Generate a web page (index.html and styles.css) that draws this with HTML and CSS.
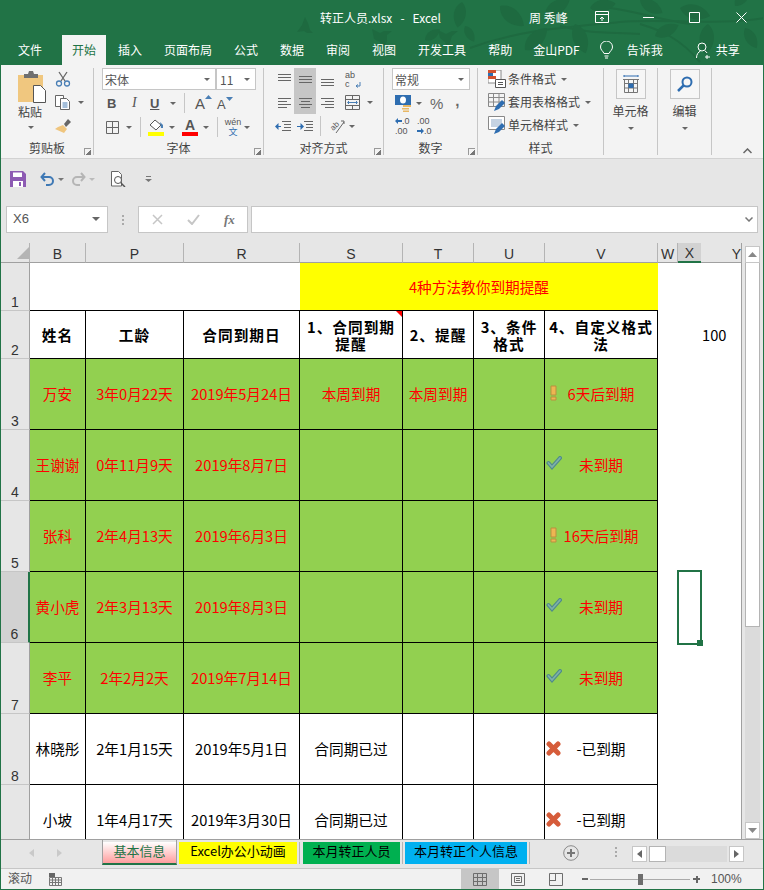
FILE: index.html
```html
<!DOCTYPE html>
<html lang="zh">
<head>
<meta charset="utf-8">
<title>转正人员.xlsx - Excel</title>
<link rel="stylesheet" href="styles.css">
</head>
<body>
<div class="app">
  <header class="title-area">
    <svg class="leaves" width="764" height="65" viewBox="0 0 764 65">
      <defs><path id="leaf" d="M0 0C6-8 18-8 26 0C18 8 6 8 0 0Z"/></defs>
      <path class="stem" d="M470 48C520 30 560 28 620 22C660 18 720 26 764 18M560 26C590 34 610 32 640 34M610 8C640 12 660 20 690 24M640 24C660 30 680 38 700 62"/>
      <path d="M297 32l5-7 3-8 3 6 2 7 3 3-6 0-3-2z"/>
      <path d="M372 29l8 4 4-2 8 0-5 4 0 6-4 8-3-7-6-3z"/>
      <path d="M438 30l8 4 6-3 6 0-6 5-2 6-2 8-3-8-5-4z"/>
      <use href="#leaf" transform="translate(462 2) rotate(100) scale(1)"/>
      <use href="#leaf" transform="translate(425 40) rotate(-35) scale(.7)"/>
      <use href="#leaf" transform="translate(465 26) rotate(60) scale(.7)"/>
      <use href="#leaf" transform="translate(500 6) rotate(40) scale(1.200)"/>
      <use href="#leaf" transform="translate(525 50) rotate(-45) scale(1.200)"/>
      <use href="#leaf" transform="translate(545 14) rotate(-30) scale(1.100)"/>
      <use href="#leaf" transform="translate(575 24) rotate(70) scale(1.200)"/>
      <use href="#leaf" transform="translate(590 8) rotate(-10) scale(1)"/>
      <use href="#leaf" transform="translate(640 0) rotate(30) scale(1)"/>
      <use href="#leaf" transform="translate(655 36) rotate(-25) scale(1)"/>
      <use href="#leaf" transform="translate(680 8) rotate(15) scale(1.200)"/>
      <use href="#leaf" transform="translate(708 24) rotate(95) scale(1.200)"/>
      <use href="#leaf" transform="translate(735 6) rotate(-50) scale(.9)"/>
      <use href="#leaf" transform="translate(745 28) rotate(60) scale(.9)"/>
    </svg>
    <div class="title-bar">
      <span class="doc-title">转正人员.xlsx&nbsp;&nbsp; - &nbsp;&nbsp;Excel</span>
      <span class="user">周 秀峰</span>
      <svg class="win-ic first" width="15" height="13" viewBox="0 0 15 13"><path d="M.5.5h13v11H.5zM.5 3.500h13M7 10V6M5 8l2-2 2 2" fill="none" stroke="#fff"/></svg>
      <svg class="win-ic min" width="12" height="13" viewBox="0 0 12 13"><path d="M0 6.500h11" stroke="#fff"/></svg>
      <svg class="win-ic max" width="12" height="12" viewBox="0 0 12 12"><path d="M.5.5h10v10H.5z" fill="none" stroke="#fff"/></svg>
      <svg class="win-ic close" width="12" height="12" viewBox="0 0 12 12"><path d="M.5.5l10 10M10.500.5l-10 10" fill="none" stroke="#fff"/></svg>
    </div>
    <nav class="tabs">
      <span class="tab file">文件</span>
      <span class="tab active">开始</span>
      <span class="tab">插入</span>
      <span class="tab">页面布局</span>
      <span class="tab">公式</span>
      <span class="tab">数据</span>
      <span class="tab">审阅</span>
      <span class="tab">视图</span>
      <span class="tab">开发工具</span>
      <span class="tab">帮助</span>
      <span class="tab pdf">金山PDF</span>
      <svg class="bulb" width="13" height="18" viewBox="0 0 13 18"><path d="M4 12.500C3 10 .5 9 .5 6a6 6 0 0 1 12 0c0 3-2.500 4-3.500 6.500zM4.500 15h4M5 17h3" fill="none" stroke="#fff"/></svg>
      <span class="tab tell">告诉我</span>
      <svg class="person" width="15" height="17" viewBox="0 0 15 17"><circle cx="6" cy="5" r="4" fill="none" stroke="#fff"/><path d="M.5 16c0-4 2-6 4-7M9 9c1 .5 1.500 1 2 2M11 13v4M9 15h5" fill="none" stroke="#fff"/></svg>
      <span class="tab share">共享</span>
    </nav>
  </header>

  <section class="ribbon">
    <div class="group g-clip">
      <div class="g-body clip-body">
        <div class="paste">
          <svg width="29" height="33" viewBox="0 0 29 33"><path d="M0 4h25v27H0z" fill="#f0c77f"/><path d="M6 3h4l1-3h4l1 3h4v4H6z" fill="#6f6f6f"/><path d="M15.500 14.500h7l5 5v12h-12z" fill="#fff" stroke="#555"/></svg>
          <span class="paste-text">粘贴</span>
          <i class="caret"></i>
        </div>
        <div class="clip-side">
          <svg width="16" height="16" viewBox="0 0 16 16"><path d="M4 1l6 9M12 1L6 10" stroke="#666" fill="none" stroke-width="1.300"/><circle cx="4" cy="12.500" r="2.500" fill="none" stroke="#4a7fb5" stroke-width="1.300"/><circle cx="12" cy="12.500" r="2.500" fill="none" stroke="#4a7fb5" stroke-width="1.300"/></svg>
          <div class="row"><svg width="16" height="15" viewBox="0 0 16 15"><path d="M.5.500h8v11h-8z" fill="#fff" stroke="#666"/><path d="M5.500 3.500h6l3 3v8h-9z" fill="#fff" stroke="#666"/><path d="M7.500 8h5M7.500 10h5M7.500 12h5" stroke="#4a7fb5"/></svg><i class="caret caret-copy"></i></div>
          <svg width="16" height="15" viewBox="0 0 16 15"><path d="M8 7l4 4-3 4-9-4 3-2z" fill="#efc57e"/><path d="M9 6l4-5 3 3-5 5z" fill="#666"/></svg>
        </div>
      </div>
      <div class="g-label">剪贴板<i class="launcher"></i></div>
    </div>

    <div class="group g-font">
      <div class="g-body font-body">
        <div class="row combos">
          <div class="combo name"><span>宋体</span><i class="caret"></i></div>
          <div class="combo size"><span>11</span><i class="caret"></i></div>
        </div>
        <div class="row font-2">
          <b class="glyph bold">B</b><i class="glyph ital">I</i><span class="glyph und">U</span><i class="caret"></i>
          <span class="vsep s1"></span>
          <span class="glyph grow">A<svg width="7" height="4" viewBox="0 0 7 4"><path d="M0 4l3.500-4L7 4z" fill="#4a7fb5"/></svg></span>
          <span class="glyph shrink">A<svg width="7" height="4" viewBox="0 0 7 4"><path d="M0 0l3.500 4L7 0z" fill="#4a7fb5"/></svg></span>
        </div>
        <div class="row font-3">
          <svg width="13" height="13" viewBox="0 0 13 13"><path d="M.5.500h12v12H.5zM6.500 0v13M0 6.500h13" fill="none" stroke="#666"/></svg>
          <i class="caret caret-bd"></i>
          <span class="vsep s2"></span>
          <span class="colorbtn"><svg width="16" height="13" viewBox="0 0 16 13"><path d="M7 1l6 5-5 5-6-5z" fill="#fff" stroke="#555"/><path d="M12 3l3 3v3h-2z" fill="#4a7fb5"/></svg><i class="bar yellow"></i></span>
          <i class="caret caret-col"></i>
          <span class="colorbtn"><span class="a">A</span><i class="bar red"></i></span>
          <i class="caret caret-col"></i>
          <span class="vsep s3"></span>
          <span class="wen"><span class="wen-t">wén</span><span class="wen-b">文</span></span>
          <i class="caret caret-wen"></i>
        </div>
      </div>
      <div class="g-label">字体<i class="launcher"></i></div>
    </div>

    <div class="group g-align">
      <div class="g-body align-body">
        <div class="align-grid">
          <svg width="15" height="15" viewBox="0 0 15 15"><path d="M1 2.500h13M1 5.500h13M1 8.500h13" stroke="#666"/></svg>
          <span class="on"><svg width="15" height="15" viewBox="0 0 15 15"><path d="M1 4.500h13M1 7.500h13M1 10.500h13" stroke="#666"/></svg></span>
          <svg width="15" height="15" viewBox="0 0 15 15"><path d="M1 7.500h13M1 10.500h13M1 13.500h13" stroke="#666"/></svg>
          <span class="wrap-ic"><span class="wrap-t">ab<br>c</span><svg width="6" height="7" viewBox="0 0 6 7"><path d="M5 0v4H1M3 2.500L1 4l2 1.500" fill="none" stroke="#4a7fb5"/></svg></span>
          <svg width="15" height="15" viewBox="0 0 15 15"><path d="M1 3.500h13M1 6.500h9M1 9.500h13M1 12.500h9" stroke="#666"/></svg>
          <span class="on"><svg width="15" height="15" viewBox="0 0 15 15"><path d="M1 3.500h13M3 6.500h9M1 9.500h13M3 12.500h9" stroke="#666"/></svg></span>
          <svg width="15" height="15" viewBox="0 0 15 15"><path d="M1 3.500h13M5 6.500h9M1 9.500h13M5 12.500h9" stroke="#666"/></svg>
          <span class="row merge"><svg width="15" height="15" viewBox="0 0 15 15"><path d="M.5.500h14v14H.5zM0 4.500h15M0 10.500h15M7.500 11v4M7.500 0v4" fill="none" stroke="#666"/><path d="M3 7.500h9M4 6l-1.500 1.500L4 9M11 6l1.500 1.500L11 9" fill="none" stroke="#4a7fb5"/></svg><i class="caret"></i></span>
        </div>
        <div class="row align-3">
          <svg width="16" height="13" viewBox="0 0 16 13"><path d="M7 1.500h9M9 4.500h7M9 7.500h7M7 10.500h9" stroke="#666"/><path d="M2 6h4v1H2z" fill="#2e6db0"/><path d="M0 6.500L3.500 3v7z" fill="#2e6db0"/></svg>
          <svg class="indent" width="16" height="13" viewBox="0 0 16 13"><path d="M7 1.500h9M9 4.500h7M9 7.500h7M7 10.500h9" stroke="#666"/><path d="M0 6h5v1H0z" fill="#2e6db0"/><path d="M7 6.500L3.500 3v7z" fill="#2e6db0"/></svg>
          <span class="vsep s4"></span>
          <svg width="17" height="16" viewBox="0 0 17 16"><text x="1" y="11" class="abt" transform="rotate(-45 5 8)">ab</text><path d="M7 15L15 4M12 3h3v3" fill="none" stroke="#666"/></svg>
          <i class="caret caret-or"></i>
        </div>
      </div>
      <div class="g-label">对齐方式<i class="launcher"></i></div>
    </div>

    <div class="group g-num">
      <div class="g-body num-body">
        <div class="combo general"><span>常规</span><i class="caret"></i></div>
        <div class="row num-2">
          <svg width="17" height="17" viewBox="0 0 17 17"><path d="M0 0h16v10H0z" fill="#2e6db0"/><ellipse cx="8" cy="5" rx="3" ry="3.500" fill="#fff"/><path d="M8 10h8v2H8zM7 13h7v1.500H7zM8 15.500h6V17H8z" fill="#e9b864"/></svg>
          <i class="caret caret-cur"></i><span class="pct">%</span><span class="comma">,</span>
        </div>
        <div class="row num-3">
          <span class="dec"><svg width="7" height="6" viewBox="0 0 7 6"><path d="M0 3l3-3v2h4v2H3v2z" fill="#2e6db0"/></svg>.0<br>.00</span>
          <span class="dec"><span class="dec-a">.00</span><br><svg width="7" height="6" viewBox="0 0 7 6"><path d="M7 3L4 0v2H0v2h4v2z" fill="#2e6db0"/></svg>.0</span>
        </div>
      </div>
      <div class="g-label">数字<i class="launcher"></i></div>
    </div>

    <div class="group g-style">
      <div class="g-body style-body">
        <div class="row st"><svg width="18" height="18" viewBox="0 0 18 18"><path d="M0 0h13v13H0z" fill="#fff" stroke="#888"/><path d="M0 0h8v3H0z" fill="#d2522f"/><path d="M0 3h5v3H0z" fill="#2e6db0"/><path d="M0 6h8v3H0z" fill="#d2522f"/><path d="M7.500 9.500h10v8h-10z" fill="#fff" stroke="#555"/><path d="M10 12.500h5M10 14.500h5" stroke="#555"/></svg><span>条件格式</span><i class="caret caret-st"></i></div>
        <div class="row st"><svg width="18" height="18" viewBox="0 0 18 18"><path d="M.5.500h16v13H.5zM.5 4.500h16M.5 9h16M5.500 0v14M11 0v14" fill="none" stroke="#888"/><path d="M6 18l2-5 6-6 3 3-6 6z" fill="#2e6db0"/></svg><span>套用表格格式</span><i class="caret caret-st"></i></div>
        <div class="row st"><svg width="18" height="18" viewBox="0 0 18 18"><path d="M.5.500h16v13H.5z" fill="#fff" stroke="#888"/><path d="M3 3h11v8H3z" fill="#c5d3e3"/><path d="M6 18l2-5 6-6 3 3-6 6z" fill="#2e6db0"/></svg><span>单元格样式</span><i class="caret caret-st"></i></div>
      </div>
      <div class="g-label">样式</div>
    </div>

    <div class="group g-big">
      <div class="g-body big-body">
        <span class="big-btn"><svg width="16" height="18" viewBox="0 0 16 18"><path d="M1.500 4.500h13v13h-13zM0 4.500h16M1.500 8.500h13M1.500 13h13M5.500 4.500v13M10.500 4.500v13" fill="none" stroke="#777"/><path d="M5.500 8.500h5V13h-5z" fill="#2e6db0"/><path d="M1 1h14M1 0v2M15 0v2" stroke="#2e6db0"/></svg></span>
        <span class="big-text">单元格</span>
        <i class="caret"></i>
      </div>
    </div>

    <div class="group g-big">
      <div class="g-body big-body">
        <span class="big-btn"><svg width="16" height="16" viewBox="0 0 16 16"><circle cx="10" cy="6" r="4.500" fill="none" stroke="#2e6db0" stroke-width="2"/><path d="M7 9l-6 6" stroke="#2e6db0" stroke-width="2.500"/></svg></span>
        <span class="big-text">编辑</span>
        <i class="caret"></i>
      </div>
    </div>
    <svg class="collapse" width="9" height="6" viewBox="0 0 9 6"><path d="M.5 5L4.500 1l4 4" fill="none" stroke="#666" stroke-width="1.500"/></svg>
  </section>

  <section class="qat">
    <svg width="16" height="16" viewBox="0 0 16 16"><path d="M0 0h13l3 3v13H0z" fill="#8d5bb3"/><path d="M3 1.500h9V6H3zM3 10h10v6H3z" fill="#fff"/><path d="M9 11h2v4H9z" fill="#8d5bb3"/></svg>
    <svg class="undo" width="15" height="14" viewBox="0 0 15 14"><path d="M2 5h7a4 4 0 0 1 0 8H6M5 1L1.500 5 5 9" fill="none" stroke="#3f79b5" stroke-width="2"/></svg>
    <i class="caret caret-q"></i>
    <svg class="redo" width="15" height="14" viewBox="0 0 15 14"><path d="M13 5H6a4 4 0 0 0 0 8h3M10 1l3.500 4L10 9" fill="none" stroke="#b5b5b5" stroke-width="2"/></svg>
    <i class="caret caret-q light"></i>
    <svg class="preview" width="15" height="16" viewBox="0 0 15 16"><path d="M.5.500h7l3 3V15H.5z" fill="#fff" stroke="#666"/><circle cx="7" cy="9" r="3.500" fill="#fff" stroke="#555"/><path d="M10 12l4 4" stroke="#555" stroke-width="1.500"/></svg>
    <svg class="custom" width="7" height="6" viewBox="0 0 7 6"><path d="M1 .5h5" stroke="#777"/><path d="M0 3h7L3.500 6z" fill="#777"/></svg>
  </section>

  <section class="formula">
    <div class="namebox"><span>X6</span><i class="caret big"></i></div>
    <span class="dots"></span>
    <div class="fxbox">
      <svg width="11" height="11" viewBox="0 0 11 11"><path d="M1 1l9 9M10 1l-9 9" stroke="#c6c6c6" stroke-width="1.500"/></svg>
      <svg width="13" height="11" viewBox="0 0 13 11"><path d="M1 6l4 4 7-9" fill="none" stroke="#c6c6c6" stroke-width="2"/></svg>
      <span class="fx">fx</span>
    </div>
    <div class="input"><svg width="8" height="5" viewBox="0 0 8 5"><path d="M.5.500L4 4 7.500.5" fill="none" stroke="#777" stroke-width="1.500"/></svg></div>
  </section>

  <section class="sheet-area">
    <div class="grid">
      <table class="sheet">
        <colgroup>
          <col class="col-h"><col class="col-b"><col class="col-p"><col class="col-r"><col class="col-s"><col class="col-t"><col class="col-u"><col class="col-v"><col class="col-w"><col class="col-x"><col class="col-y">
        </colgroup>
        <thead>
          <tr class="r-head">
            <th class="corner"><svg width="12" height="12" viewBox="0 0 12 12"><path d="M12 0v12H0z" fill="#b4b4b4"/></svg></th>
            <th>B</th><th>P</th><th>R</th><th>S</th><th>T</th><th>U</th><th>V</th><th>W</th><th class="sel-col">X</th><th class="head-y">Y</th>
          </tr>
        </thead>
        <tbody>
          <tr class="r-short">
            <th class="rn">1</th>
            <td colspan="3" class="blank-title"></td>
            <td colspan="4" class="banner">4种方法教你到期提醒</td>
            <td class="open"></td><td class="open"></td><td class="open"></td>
          </tr>
          <tr class="r-short">
            <th class="rn">2</th>
            <td class="hd">姓名</td><td class="hd">工龄</td><td class="hd">合同到期日</td>
            <td class="hd note">1、合同到期<br>提醒</td><td class="hd">2、提醒</td><td class="hd">3、条件<br>格式</td><td class="hd">4、自定义格式<br>法</td>
            <td class="open"></td><td class="open"></td><td class="open val">100</td>
          </tr>
          <tr class="r-tall g">
            <th class="rn">3</th>
            <td>万安</td><td>3年0月22天</td><td>2019年5月24日</td><td>本周到期</td><td>本周到期</td><td></td>
            <td class="flag"><svg class="mark warn" width="7" height="16" viewBox="0 0 7 16"><path d="M1 1h5v9H1zM1 12h5v3H1z" fill="#eeb552" stroke="#b98f3f"/></svg>6天后到期</td>
            <td class="open"></td><td class="open"></td><td class="open"></td>
          </tr>
          <tr class="r-tall g">
            <th class="rn">4</th>
            <td>王谢谢</td><td>0年11月9天</td><td>2019年8月7日</td><td></td><td></td><td></td>
            <td class="flag"><svg class="mark chk" width="16" height="14" viewBox="0 0 16 14"><path d="M2.500 7l3.500 4 8-9" fill="none" stroke="#4f8a8c" stroke-width="4" stroke-linecap="round"/><path d="M2.500 7l3.500 4 8-9" fill="none" stroke="#7fb0a8" stroke-width="1.800" stroke-linecap="round"/></svg>未到期</td>
            <td class="open"></td><td class="open"></td><td class="open"></td>
          </tr>
          <tr class="r-tall g">
            <th class="rn">5</th>
            <td>张科</td><td>2年4月13天</td><td>2019年6月3日</td><td></td><td></td><td></td>
            <td class="flag"><svg class="mark warn" width="7" height="16" viewBox="0 0 7 16"><path d="M1 1h5v9H1zM1 12h5v3H1z" fill="#eeb552" stroke="#b98f3f"/></svg>16天后到期</td>
            <td class="open"></td><td class="open"></td><td class="open"></td>
          </tr>
          <tr class="r-tall g">
            <th class="rn sel-row">6</th>
            <td>黄小虎</td><td>2年3月13天</td><td>2019年8月3日</td><td></td><td></td><td></td>
            <td class="flag"><svg class="mark chk" width="16" height="14" viewBox="0 0 16 14"><path d="M2.500 7l3.500 4 8-9" fill="none" stroke="#4f8a8c" stroke-width="4" stroke-linecap="round"/><path d="M2.500 7l3.500 4 8-9" fill="none" stroke="#7fb0a8" stroke-width="1.800" stroke-linecap="round"/></svg>未到期</td>
            <td class="open"></td><td class="open active-cell"><span class="cursor"><i class="handle"></i></span></td><td class="open"></td>
          </tr>
          <tr class="r-tall g">
            <th class="rn">7</th>
            <td>李平</td><td>2年2月2天</td><td>2019年7月14日</td><td></td><td></td><td></td>
            <td class="flag"><svg class="mark chk" width="16" height="14" viewBox="0 0 16 14"><path d="M2.500 7l3.500 4 8-9" fill="none" stroke="#4f8a8c" stroke-width="4" stroke-linecap="round"/><path d="M2.500 7l3.500 4 8-9" fill="none" stroke="#7fb0a8" stroke-width="1.800" stroke-linecap="round"/></svg>未到期</td>
            <td class="open"></td><td class="open"></td><td class="open"></td>
          </tr>
          <tr class="r-tall">
            <th class="rn">8</th>
            <td>林晓彤</td><td>2年1月15天</td><td>2019年5月1日</td><td>合同期已过</td><td></td><td></td>
            <td class="flag"><svg class="mark cross" width="15" height="15" viewBox="0 0 15 15"><path d="M3 3l9 9M12 3l-9 9" stroke="#d65c3a" stroke-width="5" stroke-linecap="round"/></svg>-已到期</td>
            <td class="open"></td><td class="open"></td><td class="open"></td>
          </tr>
          <tr class="r-tall">
            <th class="rn">9</th>
            <td>小坡</td><td>1年4月17天</td><td>2019年3月30日</td><td>合同期已过</td><td></td><td></td>
            <td class="flag"><svg class="mark cross" width="15" height="15" viewBox="0 0 15 15"><path d="M3 3l9 9M12 3l-9 9" stroke="#d65c3a" stroke-width="5" stroke-linecap="round"/></svg>-已到期</td>
            <td class="open"></td><td class="open"></td><td class="open"></td>
          </tr>
        </tbody>
      </table>
    </div>
    <div class="vscroll">
      <span class="sb-btn"><svg width="9" height="5" viewBox="0 0 9 5"><path d="M0 5l4.500-5L9 5z" fill="#888"/></svg></span>
      <span class="sb-thumb"></span>
      <span class="sb-track"></span>
      <span class="sb-btn"><svg width="9" height="5" viewBox="0 0 9 5"><path d="M0 0l4.500 5L9 0z" fill="#888"/></svg></span>
    </div>
  </section>

  <section class="sheet-tabs">
    <span class="nav-arrows">
      <svg width="5" height="8" viewBox="0 0 5 8"><path d="M5 0v8L0 4z" fill="#c9c9c9"/></svg>
      <svg width="5" height="8" viewBox="0 0 5 8"><path d="M0 0v8l5-4z" fill="#c9c9c9"/></svg>
    </span>
    <span class="stab s-active">基本信息</span>
    <span class="stab s-yellow">Excel办公小动画</span>
    <span class="stab s-green">本月转正人员</span>
    <span class="stab s-blue">本月转正个人信息</span>
    <svg class="add" width="16" height="16" viewBox="0 0 16 16"><circle cx="8" cy="8" r="7.300" fill="none" stroke="#8a8a8a"/><path d="M8 4v8M4 8h8" stroke="#777" stroke-width="2"/></svg>
    <span class="dots tdots"></span>
    <div class="hscroll">
      <span class="hb"><svg width="5" height="8" viewBox="0 0 5 8"><path d="M5 0v8L0 4z" fill="#666"/></svg></span>
      <span class="h-track"><span class="h-thumb"></span></span>
      <span class="hb"><svg width="5" height="8" viewBox="0 0 5 8"><path d="M0 0v8l5-4z" fill="#666"/></svg></span>
    </div>
  </section>

  <footer class="status">
    <span class="st-text">滚动</span>
    <svg width="13" height="13" viewBox="0 0 13 13"><path d="M0 0h6v4H0z" fill="#666"/><path d="M.5 4.500h12v8H.5zM0 7h13M0 9.500h13M3.500 5v8M6.500 5v8M9.500 5v8" fill="none" stroke="#777"/></svg>
    <span class="view on-view"><svg width="14" height="13" viewBox="0 0 14 13"><path d="M.5.500h13v12H.5zM.5 4.500h13M.5 8.500h13M4.500 0v13M9.500 0v13" fill="none" stroke="#6d6d6d"/></svg></span>
    <span class="view"><svg width="14" height="13" viewBox="0 0 14 13"><path d="M.5.500h13v12H.5z" fill="none" stroke="#6d6d6d"/><path d="M3.500 3.500h7v6h-7zM5 5.500h4M5 7.500h4" fill="none" stroke="#6d6d6d"/></svg></span>
    <span class="view"><svg width="14" height="13" viewBox="0 0 14 13"><path d="M.5.500h13v12H.5zM.5 7.500h6M6.500 0v8" fill="none" stroke="#6d6d6d"/></svg></span>
    <span class="zoom-minus"></span>
    <span class="slider"><i></i></span>
    <span class="zoom-plus"></span>
    <span class="zoom-val">100%</span>
  </footer>
</div>
</body>
</html>
```

FILE: styles.css
```css
* { box-sizing: border-box; }
html, body { margin: 0; padding: 0; }
body { width: 764px; height: 890px; overflow: hidden; font-family: "Noto Sans CJK SC", "Noto Sans", sans-serif; font-size: 12px; color: #444; }
svg { display: block; flex: none; }
i { font-style: normal; }
.app { width: 764px; height: 890px; display: flex; flex-direction: column; border: 1px solid #217346; border-top: 0; background: #e6e6e6; overflow: hidden; }
.row { display: flex; align-items: center; }

/* Title + tabs */
.title-area { position: relative; height: 65px; margin: 0 -1px; background: #217346; color: #fff; flex: none; }
.leaves { position: absolute; left: 0; top: 0; fill: #1e6a40; }
.leaves .stem { fill: none; stroke: #1e6a40; stroke-width: 2; }
.title-bar { position: relative; height: 35px; display: flex; align-items: center; padding-left: 320px; font-size: 12px; }
.doc-title { width: 209px; line-height: 34px; }
.user { width: 66px; }
.win-ic.min { margin-left: 33px; }
.win-ic.max { margin-left: 34px; }
.win-ic.close { margin-left: 35px; }
.tabs { position: relative; height: 30px; display: flex; align-items: center; font-size: 12px; }
.tab { padding: 0 11px; line-height: 30px; }
.tab.file { padding-left: 18px; padding-right: 9px; margin-right: 11px; }
.tab.active { background: #f3f3f3; color: #217346; padding: 0 10px; width: 44px; text-align: center; margin-right: 1px; }
.tab.pdf { padding: 0 10px; }
.bulb { margin-left: 10px; }
.tab.tell { padding: 0 0 0 14px; }
.person { margin-left: 33px; }
.tab.share { padding: 0 0 0 5px; }

/* Ribbon */
.ribbon { position: relative; height: 93px; background: #f3f3f3; display: flex; flex: none; }
.group { display: flex; flex-direction: column; margin: 3px 0; border-right: 1px solid #c6c6c6; }
.g-body { flex: 1; min-height: 0; }
.g-label { position: relative; height: 18px; line-height: 21px; text-align: center; color: #444; }
.launcher { position: absolute; right: 2px; bottom: 0; width: 7px; height: 7px; border-left: 1px solid #999; border-top: 1px solid #999; background: linear-gradient(135deg, transparent 55%, #777 56%); }
.caret { display: block; flex: none; width: 0; height: 0; border: 3px solid transparent; border-top: 3px solid #666; border-bottom: 0; }
.caret.big { border-width: 4px 4px 0; }

.g-clip { width: 93px; }
.clip-body { display: flex; padding-left: 17px; }
.paste { width: 30px; display: flex; flex-direction: column; align-items: flex-start; padding-top: 3px; }
.paste-text { line-height: 16px; font-size: 12px; }
.paste .caret { margin: 6px 0 0 10px; }
.clip-side { margin-left: 7px; padding-top: 3px; display: flex; flex-direction: column; gap: 8px; }
.caret-copy { margin-left: 7px; }

.g-font { width: 170px; }
.font-body { padding-left: 8px; }
.combo { height: 22px; background: #fff; border: 1px solid #c6c6c6; display: flex; align-items: center; justify-content: space-between; padding: 0 5px 0 2px; font-size: 12px; color: #555; }
.combo.name { width: 114px; }
.combo.size { width: 40px; padding-left: 3px; }
.font-2 { height: 24px; margin-top: 1px; padding-left: 5px; }
.glyph { display: block; font-family: "Liberation Sans", sans-serif; font-size: 13px; color: #555; }
.bold { width: 22px; }
.ital { width: 21px; padding-left: 3px; font-family: "Liberation Serif", serif; font-style: italic; font-size: 14px; }
.und { width: 20px; text-decoration: underline; font-weight: bold; }
.vsep { display: block; flex: none; width: 1px; height: 20px; background: #c6c6c6; }
.s1 { margin: 0 10px 0 8px; }
.grow, .shrink { display: flex; width: 22px; font-size: 15px; }
.shrink { font-size: 13px; padding-top: 2px; }
.font-3 { height: 24px; padding-left: 4px; }
.caret-bd { margin-left: 7px; }
.s2 { margin: 0 7px 0 8px; }
.colorbtn { display: flex; flex-direction: column; align-items: center; width: 16px; }
.bar { display: block; width: 16px; height: 4px; }
.yellow { background: #ff0; }
.red { background: #f00; }
.caret-col { margin: 0 7px 0 5px; }
.caret-wen { margin-left: 4px; }
.a { font: bold 14px/13px "Liberation Sans", sans-serif; color: #555; }
.s3 { margin: 0 8px 0 1px; }
.wen { display: flex; flex-direction: column; align-items: center; width: 14px; }
.wen-t { font: 9px/10px "Liberation Sans", sans-serif; color: #555; }
.wen-b { font-size: 9px; line-height: 10px; color: #2e6db0; }

.g-align { width: 120px; }
.align-body { padding-left: 10px; }
.align-grid { display: grid; grid-template-columns: 20px 22px 23px auto; grid-template-rows: 23px 23px; align-items: center; justify-items: center; }
.align-grid .on { background: #c6c6c6; width: 22px; height: 23px; display: flex; align-items: center; justify-content: center; }
.wrap-ic, .merge { justify-self: start; margin-left: 6px; }
.wrap-ic { display: flex; align-items: flex-end; }
.wrap-t { font: 9px/9px "Liberation Sans", sans-serif; color: #555; }
.merge .caret { margin-left: 7px; }
.abt { font: 8px "Liberation Sans", sans-serif; fill: #555; }
.align-3 { height: 24px; padding-left: 1px; }
.indent { margin-left: 6px; }
.s4 { margin: 0 8px 0 7px; }
.caret-or { margin-left: 3px; }

.g-num { width: 94px; }
.num-body { padding-left: 8px; }
.combo.general { width: 78px; }
.num-2 { height: 25px; padding: 2px 0 0 3px; }
.caret-cur { margin-left: 4px; }
.pct { margin-left: 8px; font: 15px "Liberation Sans", sans-serif; color: #666; }
.comma { margin-left: 12px; font: bold 15px "Liberation Sans", sans-serif; color: #666; margin-top: -6px; }
.num-3 { height: 22px; padding-left: 3px; gap: 6px; }
.dec { font: 9px/10px "Liberation Sans", sans-serif; color: #555; width: 16px; }
.dec svg { display: inline-block; }

.g-style { width: 126px; }
.style-body { padding: 2px 0 0 10px; display: flex; flex-direction: column; gap: 5px; }
.st { height: 18px; gap: 2px; font-size: 12px; color: #444; line-height: 18px; }
.caret-st { margin-left: 3px; }

.g-big { width: 54px; }
.big-body { display: flex; flex-direction: column; align-items: center; }
.big-btn { width: 30px; height: 30px; margin-top: 1px; border: 1px solid #c6c6c6; background: #f6f6f6; display: flex; align-items: center; justify-content: center; }
.big-text { line-height: 18px; margin-top: 3px; }
.big-body .caret { margin-top: 7px; }
.collapse { position: absolute; right: 11px; bottom: 4px; }

/* QAT */
.qat { height: 39px; flex: none; display: flex; align-items: center; padding: 2px 0 0 9px; background: #e6e6e6; border-top: 1px solid #d2d2d2; }
.undo { margin-left: 14px; }
.caret-q { margin-left: 3px; border-top-color: #777; }
.caret-q.light { border-top-color: #bbb; }
.redo { margin-left: 7px; }
.preview { margin-left: 16px; }
.custom { margin-left: 19px; }

/* Formula bar */
.formula { height: 46px; flex: none; display: flex; padding: 9px 5px 10px 5px; background: #e6e6e6; }
.namebox { width: 102px; background: #fff; border: 1px solid #c6c6c6; display: flex; align-items: center; justify-content: space-between; padding: 0 7px 2px 6px; font: 13px "Liberation Sans", sans-serif; color: #555; }
.dots { display: block; width: 2px; height: 10px; background-image: linear-gradient(#aaa 2px, transparent 2px); background-size: 2px 4px; }
.formula .dots { margin: 9px 14px 0 14px; }
.fxbox { width: 110px; background: #fff; border: 1px solid #c6c6c6; display: flex; align-items: center; padding-left: 13px; gap: 24px; }
.fx { font: italic bold 13px "Liberation Serif", serif; color: #777; }
.input { flex: 1; margin-left: 3px; background: #fff; border: 1px solid #c6c6c6; display: flex; align-items: center; justify-content: flex-end; padding-right: 4px; }

/* Sheet */
.sheet-area { height: 596px; flex: none; display: flex; }
.grid { width: 741px; height: 596px; overflow: hidden; flex: none; }
.sheet { width: 741px; table-layout: fixed; border-collapse: separate; border-spacing: 0; font-size: 14.67px; color: #000; background: #fff; }
.col-h { width: 29px; } .col-b { width: 56px; } .col-p { width: 98px; } .col-r { width: 116px; } .col-s { width: 103px; }
.col-t { width: 71px; } .col-u { width: 71px; } .col-v { width: 113px; } .col-w { width: 20px; } .col-x { width: 23px; } .col-y { width: 41px; }
.r-head { height: 20px; }
.r-head th { padding: 3px 0 0; background: #e6e6e6; border-bottom: 1px solid #a0a0a0; border-right: 1px solid #b4b4b4; font: 14px/16px "Liberation Sans", sans-serif; color: #333; text-align: center; }
.r-head th.corner { padding: 4px 0 0 16px; vertical-align: top; }
.r-head th.sel-col { padding-top: 2px; background: #d2d2d2; border-bottom: 2px solid #217346; border-right: 0; }
.r-head th.head-y { text-align: right; border-right: 1px solid #a0a0a0; }
.r-short { height: 48px; }
.r-tall { height: 71px; }
.rn { background: #e6e6e6; border-right: 1px solid #a0a0a0; border-bottom: 1px solid #c6c6c6; font: 14px/16px "Liberation Sans", sans-serif; color: #333; text-align: center; vertical-align: bottom; padding: 0; }
.rn.sel-row { background: #d2d2d2; border-right: 2px solid #217346; }
.sheet td { border-right: 1px solid #000; border-bottom: 1px solid #000; text-align: center; vertical-align: middle; padding: 0; line-height: 18px; }
.g td { background: #92d050; color: #f00; }
.sheet td.open { background: #fff; border: 0; color: #000; }
.sheet td.open:last-child { border-right: 1px solid #a0a0a0; }
.sheet td.blank-title { border-right: 0; }
.sheet td.banner { background: #ff0; color: #f00; border-right: 0; }
.sheet td.hd { font-weight: 700; letter-spacing: 1px; line-height: 17px; }
.note { position: relative; }
.note::after { content: ""; position: absolute; right: 0; top: 0; border: 3.500px solid transparent; border-top-color: #f00; border-right-color: #f00; }
.sheet td.val { text-align: left; padding-left: 1px; }
.flag { position: relative; }
.mark { position: absolute; top: 50%; }
.warn { left: 5px; margin-top: -9px; }
.chk { left: 1px; margin-top: -9px; }
.cross { left: 1px; margin-top: -8px; }
.active-cell { position: relative; }
.cursor { position: absolute; left: -1px; right: -1px; top: -2px; bottom: -2px; border: 2px solid #217346; z-index: 2; }
.handle { position: absolute; right: -3px; bottom: -3px; width: 6px; height: 6px; background: #217346; }

/* Vertical scrollbar */
.vscroll { width: 21px; padding: 3px 3px 0 3px; display: flex; flex-direction: column; background: #e6e6e6; }
.sb-btn { height: 17px; flex: none; background: #fff; border: 1px solid #c6c6c6; display: flex; align-items: center; justify-content: center; }
.sb-thumb { height: 364px; flex: none; background: #fff; border: 1px solid #b4b4b4; border-top: 0; }
.sb-track { flex: 1; background: #dbdbdb; }

/* Sheet tabs */
.sheet-tabs { height: 29px; flex: none; display: flex; align-items: flex-start; background: #e6e6e6; border-top: 1px solid #a0a0a0; padding-top: 2px; font-size: 13px; color: #000; }
.nav-arrows { width: 101px; padding: 7px 0 0 28px; display: flex; gap: 23px; }
.stab { height: 22px; line-height: 18px; text-align: center; margin-right: 5px; position: relative; }
.s-active { width: 75px; height: 25px; margin-top: -2px; padding-top: 2px; margin-right: 2px; color: #217346; background: linear-gradient(#fff, #f99); background-size: 100% 22px; background-repeat: no-repeat; background-position: 0 2px; border-left: 1px solid #a0a0a0; border-right: 1px solid #a0a0a0; border-bottom: 2px solid #217346; }
.s-yellow { width: 118px; background: #ff0; margin-right: 6px; }
.s-green { width: 97px; background: #00b050; }
.s-blue { width: 122px; background: #00b0f0; }
.s-yellow::after, .s-green::after, .s-blue::after { content: ""; position: absolute; right: -3px; top: 0; width: 1px; height: 22px; background: #b4b4b4; }
.add { margin: 3px 0 0 31px; }
.tdots { margin: 5px 0 0 36px; height: 12px; }
.hscroll { display: flex; margin: 4px 0 0 15px; height: 16px; }
.hb { width: 15px; background: #fff; border: 1px solid #c6c6c6; display: flex; align-items: center; justify-content: center; }
.h-track { width: 78px; margin: 0 2px; background: #dbdbdb; }
.h-thumb { display: block; width: 17px; height: 16px; background: #fff; border: 1px solid #b4b4b4; }

/* Status bar */
.status { flex: 1; min-height: 0; display: flex; align-items: center; background: #f1f1f1; border-top: 1px solid #c6c6c6; color: #555; font-size: 12px; padding-left: 7px; }
.st-text { width: 41px; margin-top: -3px; }
.view { display: flex; align-items: center; justify-content: center; height: 100%; width: 38px; }
.on-view { margin-left: 399px; background: #c6c6c6; }
.zoom-minus { width: 6px; height: 2px; background: #666; margin-left: 7px; }
.slider { display: block; position: relative; width: 100px; height: 1px; margin: 0 3px 0 2px; background: #aaa; }
.slider i { position: absolute; left: 48px; top: -5px; width: 5px; height: 11px; background: #6d6d6d; }
.zoom-plus { position: relative; width: 7px; height: 2px; background: #666; }
.zoom-plus::after { content: ""; position: absolute; left: 2.500px; top: -2.500px; width: 2px; height: 7px; background: #666; }
.zoom-val { margin: -1px 0 0 11px; font: 12px "Liberation Sans", sans-serif; color: #555; }
```
